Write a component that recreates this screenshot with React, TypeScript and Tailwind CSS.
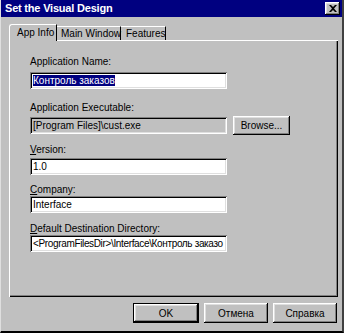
import React from 'react';

const raised =
  'shadow-[inset_-1px_-1px_#000,inset_1px_1px_#fff,inset_-2px_-2px_#808080,inset_2px_2px_#dfdfdf]';
const sunken =
  'shadow-[inset_1px_1px_#808080,inset_-1px_-1px_#fff,inset_2px_2px_#000,inset_-2px_-2px_#dfdfdf]';

function Input({
  value,
  disabled,
  selected,
  tight,
}: {
  value: string;
  disabled?: boolean;
  selected?: boolean;
  tight?: boolean;
}) {
  return (
    <div
      className={`w-[197px] h-[17px] ${sunken} ${disabled ? 'bg-[#c0c0c0]' : 'bg-white'} ${tight ? 'tracking-[-0.35px]' : ''} pl-[3px] pt-[2px] leading-[13px] overflow-hidden whitespace-nowrap`}
    >
      {selected ? <span className="bg-[#000080] text-white">{value}</span> : value}
    </div>
  );
}

function Label({ text, accel }: { text: string; accel?: number }) {
  return (
    <div className="h-[13px] leading-[13px] whitespace-nowrap">
      {accel !== undefined ? (
        <>
          {text.slice(0, accel)}
          <span className="underline">{text[accel]}</span>
          {text.slice(accel + 1)}
        </>
      ) : (
        text
      )}
    </div>
  );
}

export default function App() {
  return (
    <div
      className="w-[344px] h-[333px] bg-[#c0c0c0] flex flex-col border-l border-l-[#dfdfdf] border-r-2 border-r-[#404040] border-b-2 border-b-[#000] text-[10px] text-black overflow-hidden"
      style={{ fontFamily: '"Liberation Sans", Arial, sans-serif' }}
    >
      {/* title bar */}
      <div className="h-[17px] bg-[#000080] flex items-center justify-between pl-[4px] pr-[2px]">
        <span className="text-white font-bold text-[11px] leading-[17px] tracking-[-0.2px]">Set the Visual Design</span>
        <div className={`w-[15px] h-[13px] bg-[#c0c0c0] ${raised} flex items-center justify-center`}>
          <svg width="8" height="7" viewBox="0 0 8 7">
            <path d="M0 0h2l2 2 2-2h2L5 3.5 8 7H6L4 5 2 7H0l3-3.5z" fill="#000" />
          </svg>
        </div>
      </div>

      <div className="flex-1 flex flex-col pl-[8px] pr-[4px] pt-[6px]">
        {/* tabs */}
        <div className="flex items-end h-[17px] relative z-10 whitespace-nowrap">
          <div className="h-[17px] w-[48px] border-l border-t border-white border-r border-r-[#000] rounded-tl-[3px] bg-[#c0c0c0] pl-[7px] leading-[15px] mb-[-1px] pb-[1px]">
            App Info
          </div>
          <div className="h-[14px] w-[64px] border-t border-white border-r border-r-[#000] pl-[4px] leading-[13px]">
            Main Window
          </div>
          <div className="h-[14px] w-[45px] border-t border-white border-r border-r-[#000] pl-[5px] leading-[13px]">
            Features
          </div>
        </div>

        {/* panel */}
        <div className="w-[329px] h-[257px] border-l border-t border-white shadow-[inset_-1px_-1px_#000,inset_-2px_-2px_#808080] pl-[20px] pt-[14px] flex flex-col">
          <Label text="Application Name:" />
          <div className="mt-[4px]">
            <Input value="Контроль заказов" selected />
          </div>

          <div className="mt-[12px]">
            <Label text="Application Executable:" />
          </div>
          <div className="mt-[2px] flex items-start gap-[6px]">
            <div className="mt-[1px]">
              <Input value="[Program Files]\cust.exe" disabled />
            </div>
            <div className={`w-[57px] h-[19px] ${raised} flex items-center justify-center leading-[13px]`}>
              Browse...
            </div>
          </div>

          <div className="mt-[8px]">
            <Label text="Version:" accel={0} />
          </div>
          <div className="mt-[2px]">
            <Input value="1.0" />
          </div>

          <div className="mt-[8px]">
            <Label text="Company:" accel={0} />
          </div>
          <div>
            <Input value="Interface" />
          </div>

          <div className="mt-[9px]">
            <Label text="Default Destination Directory:" accel={0} />
          </div>
          <div>
            <Input value="<ProgramFilesDir>\Interface\Контроль заказо" tight />
          </div>
        </div>

        {/* buttons */}
        <div className="flex justify-end gap-[5px] mt-[6px] pr-[1px]">
          <div className="w-[66px] h-[20px] border border-black bg-[#c0c0c0]">
            <div className={`w-full h-full ${raised} flex items-center justify-center`}>OK</div>
          </div>
          <div className={`w-[64px] h-[20px] ${raised} flex items-center justify-center`}>Отмена</div>
          <div className={`w-[64px] h-[20px] ${raised} flex items-center justify-center`}>Справка</div>
        </div>
      </div>
    </div>
  );
}
